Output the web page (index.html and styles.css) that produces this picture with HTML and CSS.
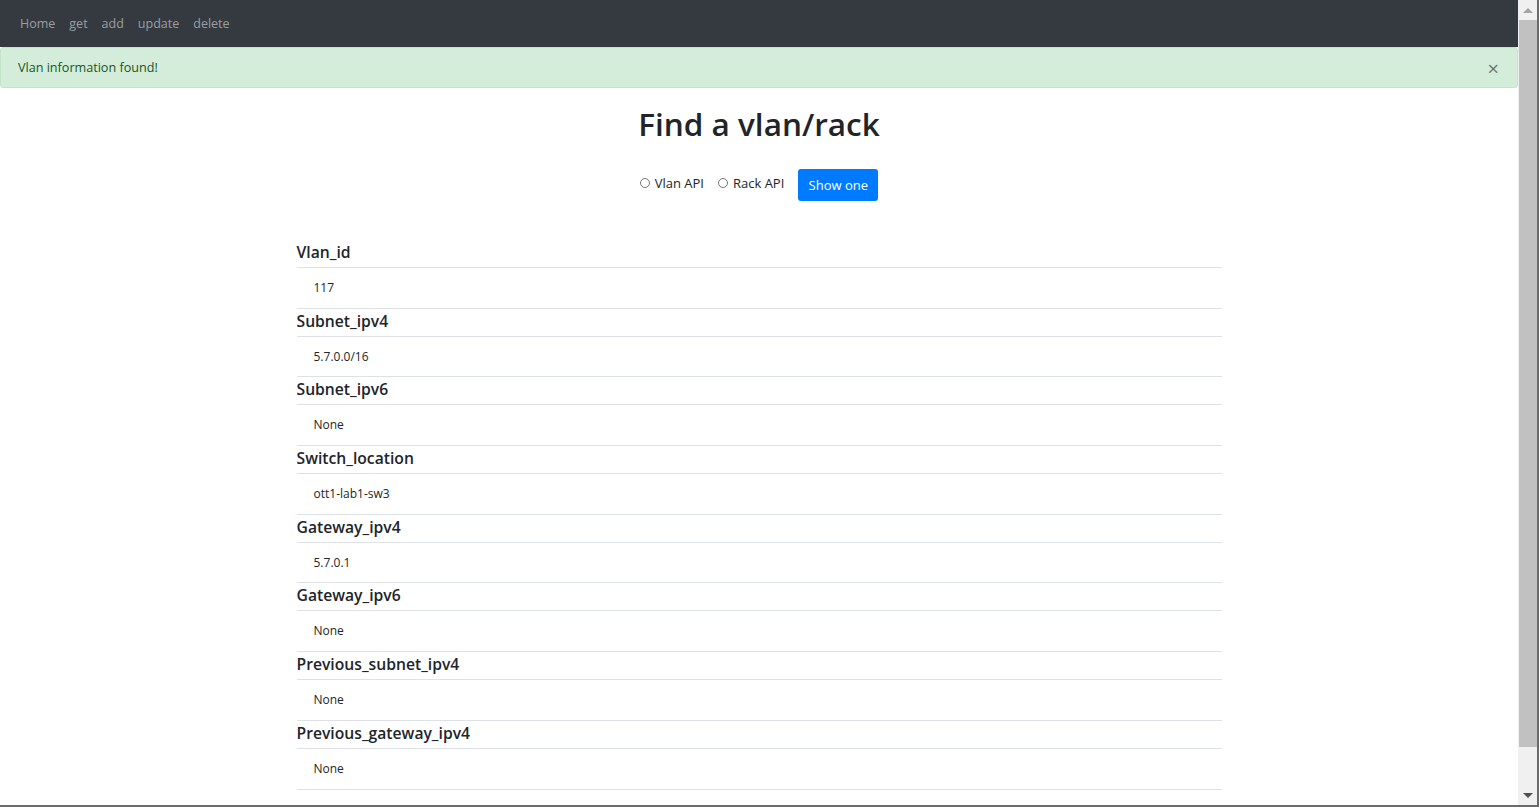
FILE: index.html
```html
<!DOCTYPE html>
<html lang="en">
<head>
<meta charset="utf-8">
<title>Find a vlan/rack</title>
<link rel="stylesheet" href="styles.css">
</head>
<body>
<div class="window">
  <div class="viewport">
    <nav class="navbar">
      <a class="nav-link" href="#">Home</a>
      <a class="nav-link" href="#">get</a>
      <a class="nav-link" href="#">add</a>
      <a class="nav-link" href="#">update</a>
      <a class="nav-link" href="#">delete</a>
    </nav>
    <div class="alert">
      <span>Vlan information found!</span>
      <button class="close" type="button">&times;</button>
    </div>
    <h1 class="title">Find a vlan/rack</h1>
    <form class="choice">
      <label class="radio"><span class="circle"></span>Vlan API</label>
      <label class="radio"><span class="circle"></span>Rack API</label>
      <button class="btn" type="button">Show one</button>
    </form>
    <div class="fields">
      <div class="field"><h5 class="field-name">Vlan_id</h5><p class="field-value">117</p></div>
      <div class="field"><h5 class="field-name">Subnet_ipv4</h5><p class="field-value">5.7.0.0/16</p></div>
      <div class="field"><h5 class="field-name">Subnet_ipv6</h5><p class="field-value">None</p></div>
      <div class="field"><h5 class="field-name">Switch_location</h5><p class="field-value">ott1-lab1-sw3</p></div>
      <div class="field"><h5 class="field-name">Gateway_ipv4</h5><p class="field-value">5.7.0.1</p></div>
      <div class="field"><h5 class="field-name">Gateway_ipv6</h5><p class="field-value">None</p></div>
      <div class="field"><h5 class="field-name">Previous_subnet_ipv4</h5><p class="field-value">None</p></div>
      <div class="field"><h5 class="field-name">Previous_gateway_ipv4</h5><p class="field-value">None</p></div>
    </div>
  </div>
  <div class="scrollbar">
    <div class="arrow up"></div>
    <div class="track"><div class="thumb"></div></div>
    <div class="arrow down"></div>
  </div>
</div>
</body>
</html>
```

FILE: styles.css
```css
html, body {
  margin: 0;
  padding: 0;
  height: 100%;
  overflow: hidden;
}
body {
  font-family: "Segoe UI", "Open Sans", "Noto Sans", sans-serif;
  color: #212529;
  background: #fff;
}
.window {
  display: flex;
  height: 805px;
  border-bottom: 2px solid #6b6b6b;
}
.viewport {
  flex: 1;
  overflow: hidden;
  min-width: 0;
}
.scrollbar {
  width: 18px;
  background: #f0f0f0;
  border-right: 2px solid #6b6b6b;
  display: flex;
  flex-direction: column;
  padding-left: 1px;
}
.arrow {
  height: 20px;
  display: flex;
  align-items: center;
  justify-content: center;
}
.arrow.up::before {
  content: "";
  border-left: 5px solid transparent;
  border-right: 5px solid transparent;
  border-bottom: 5px solid #a3a3a3;
}
.arrow.down::before {
  content: "";
  border-left: 5px solid transparent;
  border-right: 5px solid transparent;
  border-top: 5px solid #505050;
}
.track {
  flex: 1;
  display: flex;
  flex-direction: column;
}
.thumb {
  height: 727px;
  background: #c1c1c1;
}
.navbar {
  height: 47px;
  background: #343a40;
  display: flex;
  align-items: center;
  padding: 0 6px 0 13px;
}
.nav-link {
  color: rgba(255, 255, 255, 0.5);
  text-decoration: none;
  font-size: 12.5px;
  padding: 0 7px;
  line-height: 20px;
}
.alert {
  height: 41px;
  box-sizing: border-box;
  background: #d4edda;
  border: 1px solid #c3e6cb;
  border-radius: 3px;
  color: #155724;
  font-size: 12.6px;
  display: flex;
  align-items: center;
  justify-content: space-between;
  padding: 0 18px 0 17px;
}
.close {
  background: none;
  border: 0;
  padding: 0;
  margin-top: 3px;
  font-family: inherit;
  font-size: 20px;
  font-weight: 400;
  color: #000;
  opacity: 0.5;
  line-height: 1;
}
.title {
  margin: 14px 0 0;
  text-align: center;
  font-size: 31.5px;
  font-weight: 600;
  line-height: 44px;
}
.choice {
  display: flex;
  justify-content: center;
  align-items: center;
  margin-top: 23px;
  font-size: 13px;
}
.radio {
  display: flex;
  align-items: center;
  margin-right: 14px;
  margin-bottom: 4px;
}
.circle {
  width: 8px;
  height: 8px;
  border: 1px solid #767676;
  border-radius: 50%;
  margin-right: 5px;
  margin-top: -1px;
}
.btn {
  width: 80px;
  height: 32px;
  background: #007bff;
  color: #fff;
  border: 0;
  border-radius: 3px;
  font-family: inherit;
  font-size: 13px;
  padding: 0;
}
.fields {
  width: 925px;
  margin: 39px auto 0;
}
.field-name {
  margin: 0;
  font-size: 15.7px;
  font-weight: 600;
  line-height: 20px;
  padding: 2px 0 5px;
  border-bottom: 1px solid #dee2e6;
}
.field-value {
  margin: 0;
  font-size: 12px;
  line-height: 20px;
  padding: 10px 17px 9.7px;
  border-bottom: 1px solid #dee2e6;
}
```
